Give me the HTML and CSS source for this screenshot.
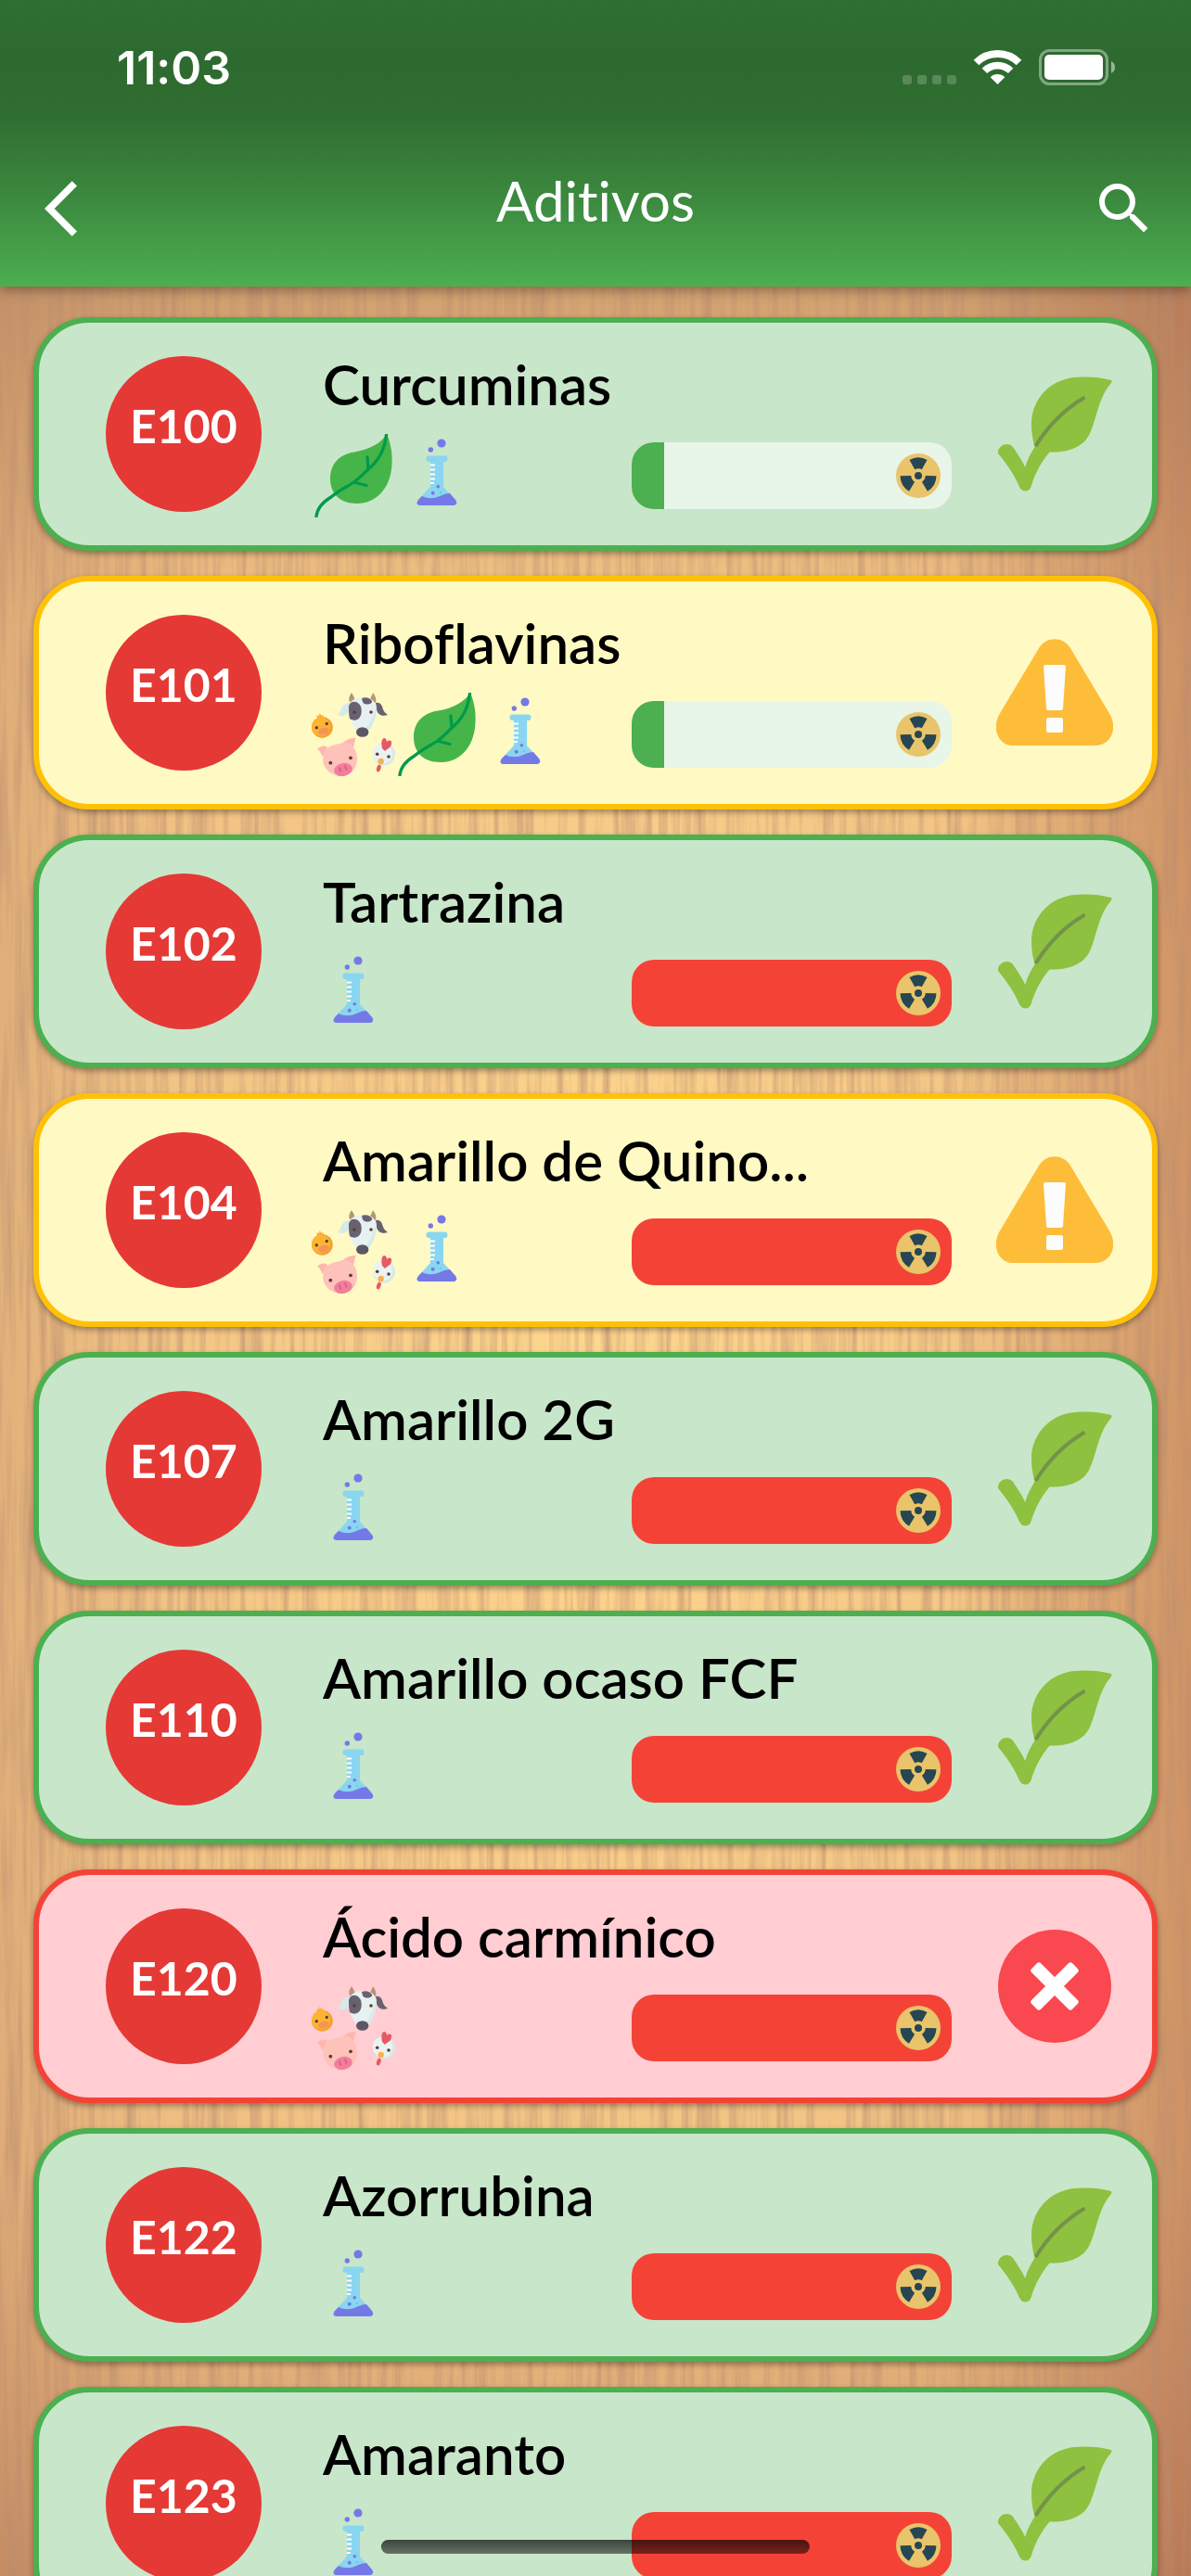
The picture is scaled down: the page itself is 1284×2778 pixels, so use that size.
FILE: index.html
```html
<!DOCTYPE html>
<html lang="es">
<head>
    <meta charset="UTF-8">
    <meta name="viewport" content="width=device-width, initial-scale=1.0">
    <title>Aditivos</title>
    <link rel="stylesheet" href="styles.css">
</head>
<body>
    <!-- Icon definitions -->
    <svg class="defs" aria-hidden="true">
        <symbol id="plant" viewBox="0 0 90 90">
            <path fill="#46b549" d="M81 0C86 12 87 22 86.500 32C86 55 72 75 49 75C30 75 20 64 20 48C20 32 30 22 46 19.500C62 17 75 10 81 0Z"/>
            <path fill="none" stroke="#009b4a" stroke-width="3.300" stroke-linecap="round" d="M80.500 1C79 16 72 29 61 38C56 43 51 48 45.500 52C38 57 29 61 21 68C11 74 6 80 5 89M60 25L61 38M45.500 52L59 55.500"/>
        </symbol>
        <symbol id="flask" viewBox="0 0 90 90">
            <circle cx="50" cy="10" r="4.600" fill="#7579e7"/>
            <circle cx="38.300" cy="17" r="2.700" fill="#7579e7"/>
            <rect x="33.500" y="23.500" width="23" height="6.500" rx="3" fill="#8ad6f0"/>
            <path fill="#8ad6f0" d="M38 28H52V57L65 71C68 75 65 77 62 77H28C24 77 22 75 25 71L38 57Z"/>
            <path fill="#7579e7" d="M29 67C35 70 42 70 48 67C52 65 56 64 59 64L65 71C68 75 65 77 62 77H28C24 77 22 75 25 71Z"/>
            <path stroke="#fff" stroke-width="2" d="M38 33.500H43M38 38.500H43M38 43.500H43M38 48.500H43M38 53H42"/>
            <circle cx="46.300" cy="56.700" r="1.800" fill="#7579e7"/>
            <circle cx="40.700" cy="63.700" r="2" fill="#7579e7"/>
            <circle cx="49" cy="63" r="1.200" fill="#74c3e8"/>
        </symbol>
        <symbol id="animals" viewBox="0 0 90 90">
            <!-- duck -->
            <path fill="#fbb031" d="M6 28L5.500 24L8 25L8.500 22L11 25L13 24L12 29Z"/>
            <circle cx="11.400" cy="37.300" r="11.400" fill="#f4a22c"/>
            <ellipse cx="10" cy="36.500" rx="9.800" ry="10.300" fill="#fdb433"/>
            <ellipse cx="12.700" cy="41.500" rx="6" ry="3.800" fill="#f4935a" transform="rotate(-18 12.700 41.500)"/>
            <circle cx="5.300" cy="37.700" r="1.700" fill="#5a4030"/>
            <circle cx="16.300" cy="33.500" r="1.700" fill="#5a4030"/>
            <!-- cow -->
            <path fill="#b39674" d="M41 10C39 5 42 2 43 0C45 4 47 5 46 9ZM63 9C63 5 65 4 66 0C69 4 70 7 69 11Z"/>
            <path fill="#d6ebe8" d="M41 11C34 11 32 16 31 20C30 22 29 23 28 24C34 27 40 23 41 18Z"/>
            <path fill="#686170" d="M69 11C75 10 76 15 77 18C78 21 80 22 82 24C76 26 71 24 70 18Z"/>
            <path fill="#e7f1f1" d="M40 15C41 8 48 5 55 5C62 5 69 8 70 16C70 28 66 35 62 41H48C44 35 39 27 40 15Z"/>
            <path fill="#d6ebe8" d="M69 14C71 26 66 35 61 41H56C63 34 67 24 69 14Z"/>
            <path fill="#686170" d="M40 15C41 8 50 8 53 15C56 26 49 33 41 28C40 24 40 19 40 15ZM54 6C59 4 63 6 65 9C66 13 57 14 55 10Z"/>
            <ellipse cx="54.700" cy="42.500" rx="6.700" ry="5.300" fill="#5d5665"/>
            <circle cx="46" cy="21" r="1.800" fill="#5a4030"/>
            <circle cx="64" cy="21" r="1.800" fill="#5a4030"/>
            <!-- pig -->
            <path fill="#ffb6ae" d="M17 59C13 56 9 58 6 61C10 63 10 67 12 69ZM34 54C38 50 42 49 48 49C45 53 47 57 44 60Z"/>
            <path fill="#ffc2bb" d="M13 67C16 55 27 57 33 54C42 52 50 62 49 73C48 83 41 90 32 90C20 90 9 79 13 67Z"/>
            <ellipse cx="34" cy="83" rx="10" ry="7" fill="#f27e9c" transform="rotate(-12 34 83)"/>
            <path stroke="#d15b84" stroke-width="1.600" stroke-linecap="round" d="M30 81L31 85M36 79L37.500 83"/>
            <circle cx="20.300" cy="75.700" r="1.900" fill="#5a4030"/>
            <circle cx="42" cy="70.300" r="1.900" fill="#5a4030"/>
            <!-- hen -->
            <ellipse cx="78" cy="66.300" rx="12" ry="12.300" fill="#d9e9e8"/>
            <ellipse cx="76.500" cy="65.500" rx="10.500" ry="11" fill="#e9f3f2"/>
            <path fill="#e55a64" d="M76 60C75 55 75 50 78 49C80 49 81 51 81 53C84 50 87 52 86 55C86 59 82 60 79 63Z"/>
            <circle cx="70.700" cy="66.300" r="1.800" fill="#5a4030"/>
            <circle cx="83" cy="69" r="1.800" fill="#5a4030"/>
            <circle cx="74.700" cy="74" r="3.200" fill="#fbb04a"/>
            <ellipse cx="72.300" cy="81.500" rx="2.200" ry="4" fill="#e55a64" transform="rotate(18 72.300 81.500)"/>
        </symbol>
        <symbol id="radiation" viewBox="0 0 48 48">
            <circle cx="24" cy="24" r="24" fill="#e9c46a"/>
            <g fill="#264653">
                <circle cx="24" cy="24" r="4"/>
                <path id="blade" d="M14.500 7A19.500 19.500 0 0 1 33.500 7L27.800 17.300A7.500 7.500 0 0 0 20.200 17.300Z"/>
                <use href="#blade" transform="rotate(120 24 24)"/>
                <use href="#blade" transform="rotate(240 24 24)"/>
            </g>
        </symbol>
        <symbol id="vegan" viewBox="0 0 126 126">
            <path fill="#8dc13f" d="M124 5C110 1 95 1 85 2C58 4 38 26 38 52C38 60 39 67 41.500 77C37 84 33 92 31.300 99C27 90 22 83 18 77C11 70 1 77 2 84C12 96 20 108 25 120C28 126 35 126 37.500 120C42 105 48 94 57.500 82.500C72 83 84 80 93 73C108 62 106 28 124 8Q125 6 124 5Z"/>
            <path fill="none" stroke="#74924a" stroke-width="4" d="M95.500 23.500C74 36 56 54 42.500 76"/>
        </symbol>
        <symbol id="warning" viewBox="0 0 126 126">
            <path fill="#fdbd39" d="M46 15C54 2 72 2 80 15L123 87C131 103 123 120 107 120H18C3 120 -5 103 3 87Z"/>
            <path fill="#fcfcfc" d="M53 33H73Q75 33 75 35L72 80Q72 82 70 82H56Q54 82 54 80L51 35Q51 33 53 33ZM56 90H70Q72 90 72 92V104Q72 106 70 106H56Q54 106 54 104V92Q54 90 56 90Z"/>
        </symbol>
        <symbol id="forbidden" viewBox="0 0 126 126">
            <circle cx="63" cy="63" r="61" fill="#f9484f"/>
            <g fill="#fff" transform="rotate(45 63 63)">
                <rect x="32" y="56" width="62" height="14" rx="3"/>
                <rect x="56" y="32" width="14" height="62" rx="3"/>
            </g>
        </symbol>
        <filter id="grain" x="0" y="0" width="100%" height="100%">
            <feTurbulence type="fractalNoise" baseFrequency="0.12 0.005" numOctaves="4" seed="8"/>
            <feColorMatrix values="0 0 0 0 0.480  0 0 0 0 0.260  0 0 0 0 0.160  1.300 0 0 0 -0.520"/>
        </filter>
    </svg>

    <svg class="wood" aria-hidden="true"><rect width="100%" height="100%" filter="url(#grain)"/></svg>

    <header class="header">
        <div class="status">
            <span>11:03</span>
            <svg width="229" height="40" viewBox="0 0 229 40" fill="#fff" aria-hidden="true">
                <g opacity=".2">
                    <rect x="0" y="28" width="10" height="10" rx="3"/>
                    <rect x="16" y="28" width="10" height="10" rx="3"/>
                    <rect x="32" y="28" width="10" height="10" rx="3"/>
                    <rect x="48" y="28" width="10" height="10" rx="3"/>
                </g>
                <path fill="none" stroke="#fff" stroke-width="8" d="M79.500 14.500A32.500 32.500 0 0 1 125.500 14.500"/>
                <path fill="none" stroke="#fff" stroke-width="7.600" d="M88.400 23.400A20 20 0 0 1 116.600 23.400"/>
                <path d="M102.500 38L94.700 30.200A11 11 0 0 1 110.300 30.200Z"/>
                <rect x="148.500" y="1.500" width="72" height="36" rx="10" fill="none" stroke="#fff" stroke-width="3" opacity=".4"/>
                <rect x="153" y="6" width="63" height="27" rx="5"/>
                <path opacity=".5" d="M225 13Q229 15 229 19.500Q229 24 225 26Z"/>
            </svg>
        </div>
        <nav class="navbar">
            <a class="back" href="#" aria-label="Volver">
                <svg width="72" height="72" viewBox="0 0 24 24" fill="#fff"><path d="M11.670 3.870L9.900 2.100 0 12l9.900 9.900 1.770-1.770L3.540 12z"/></svg>
            </a>
            <h1>Aditivos</h1>
            <button class="search" type="button" aria-label="Buscar">
                <svg width="72" height="72" viewBox="0 0 24 24" fill="#fff"><path d="M15.500 14h-.79l-.28-.27A6.471 6.471 0 0 0 16 9.500 6.500 6.500 0 1 0 9.500 16c1.610 0 3.090-.59 4.230-1.570l.27.28v.79l5 4.990L20.490 19l-4.990-5zm-6 0C7.010 14 5 11.990 5 9.500S7.010 5 9.500 5 14 7.010 14 9.500 11.990 14 9.500 14z"/></svg>
            </button>
        </nav>
    </header>

    <ul class="list">
        <li><a class="card green" href="#">
            <span class="code">E100</span>
            <div class="info">
                <h2>Curcuminas</h2>
                <div class="row">
                    <svg class="origin"><use href="#plant"/></svg>
                    <svg class="origin"><use href="#flask"/></svg>
                    <div class="bar"><div class="level low" style="width: 10%"></div><svg><use href="#radiation"/></svg></div>
                </div>
            </div>
            <svg class="verdict"><use href="#vegan"/></svg>
        </a></li>
        <li><a class="card yellow" href="#">
            <span class="code">E101</span>
            <div class="info">
                <h2>Riboflavinas</h2>
                <div class="row">
                    <svg class="origin"><use href="#animals"/></svg>
                    <svg class="origin"><use href="#plant"/></svg>
                    <svg class="origin"><use href="#flask"/></svg>
                    <div class="bar"><div class="level low" style="width: 10%"></div><svg><use href="#radiation"/></svg></div>
                </div>
            </div>
            <svg class="verdict"><use href="#warning"/></svg>
        </a></li>
        <li><a class="card green" href="#">
            <span class="code">E102</span>
            <div class="info">
                <h2>Tartrazina</h2>
                <div class="row">
                    <svg class="origin"><use href="#flask"/></svg>
                    <div class="bar"><div class="level high" style="width: 100%"></div><svg><use href="#radiation"/></svg></div>
                </div>
            </div>
            <svg class="verdict"><use href="#vegan"/></svg>
        </a></li>
        <li><a class="card yellow" href="#">
            <span class="code">E104</span>
            <div class="info">
                <h2>Amarillo de Quino...</h2>
                <div class="row">
                    <svg class="origin"><use href="#animals"/></svg>
                    <svg class="origin"><use href="#flask"/></svg>
                    <div class="bar"><div class="level high" style="width: 100%"></div><svg><use href="#radiation"/></svg></div>
                </div>
            </div>
            <svg class="verdict"><use href="#warning"/></svg>
        </a></li>
        <li><a class="card green" href="#">
            <span class="code">E107</span>
            <div class="info">
                <h2>Amarillo 2G</h2>
                <div class="row">
                    <svg class="origin"><use href="#flask"/></svg>
                    <div class="bar"><div class="level high" style="width: 100%"></div><svg><use href="#radiation"/></svg></div>
                </div>
            </div>
            <svg class="verdict"><use href="#vegan"/></svg>
        </a></li>
        <li><a class="card green" href="#">
            <span class="code">E110</span>
            <div class="info">
                <h2>Amarillo ocaso FCF</h2>
                <div class="row">
                    <svg class="origin"><use href="#flask"/></svg>
                    <div class="bar"><div class="level high" style="width: 100%"></div><svg><use href="#radiation"/></svg></div>
                </div>
            </div>
            <svg class="verdict"><use href="#vegan"/></svg>
        </a></li>
        <li><a class="card red" href="#">
            <span class="code">E120</span>
            <div class="info">
                <h2>Ácido carmínico</h2>
                <div class="row">
                    <svg class="origin"><use href="#animals"/></svg>
                    <div class="bar"><div class="level high" style="width: 100%"></div><svg><use href="#radiation"/></svg></div>
                </div>
            </div>
            <svg class="verdict"><use href="#forbidden"/></svg>
        </a></li>
        <li><a class="card green" href="#">
            <span class="code">E122</span>
            <div class="info">
                <h2>Azorrubina</h2>
                <div class="row">
                    <svg class="origin"><use href="#flask"/></svg>
                    <div class="bar"><div class="level high" style="width: 100%"></div><svg><use href="#radiation"/></svg></div>
                </div>
            </div>
            <svg class="verdict"><use href="#vegan"/></svg>
        </a></li>
        <li><a class="card green" href="#">
            <span class="code">E123</span>
            <div class="info">
                <h2>Amaranto</h2>
                <div class="row">
                    <svg class="origin"><use href="#flask"/></svg>
                    <div class="bar"><div class="level high" style="width: 100%"></div><svg><use href="#radiation"/></svg></div>
                </div>
            </div>
            <svg class="verdict"><use href="#vegan"/></svg>
        </a></li>
    </ul>

    <div class="home-indicator"></div>
</body>
</html>
```

FILE: styles.css
```css
* {
    box-sizing: border-box;
}

body {
    display: flex;
    flex-direction: column;
    height: 100vh;
    margin: 0;
    overflow: hidden;
    font-family: Lato, sans-serif;
    font-variant-ligatures: none;
    background-color: #d9a272;
    background-image:
        linear-gradient(rgba(110, 60, 50, 0.4), rgba(110, 60, 50, 0) 25%, rgba(110, 60, 50, 0) 85%, rgba(130, 60, 50, 0.25)),
        linear-gradient(90deg, rgba(150, 100, 80, 0.15), rgba(150, 90, 70, 0) 15%, rgba(150, 70, 50, 0) 80%, rgba(150, 70, 50, 0.35)),
        radial-gradient(ellipse 75% 65% at 50% 53%, #ffd78e, #e6b27c);
}

.defs {
    position: absolute;
    width: 0;
    height: 0;
}

.wood {
    position: fixed;
    inset: 0;
    z-index: -1;
    width: 100%;
    height: 100%;
}

.header {
    flex: none;
    z-index: 1;
    color: #fff;
    background: linear-gradient(#2e6f32, #2e6a2f 20%, #2f6d31 40%, #3c8a3f 70%, #4caf50);
    box-shadow: 0 4px 12px rgba(0, 0, 0, 0.35);
}

.status {
    display: flex;
    align-items: center;
    justify-content: space-between;
    height: 141px;
    padding: 4px 82px 0 126px;
    font-family: Inter, sans-serif;
    font-size: 50px;
    font-weight: 600;
}

.navbar {
    display: grid;
    grid-template-columns: 1fr auto 1fr;
    align-items: center;
    height: 168px;
    padding: 0 36px;
}

.navbar svg {
    display: block;
}

.back {
    justify-self: start;
    padding-left: 12px;
}

.search {
    justify-self: end;
    padding: 0;
    border: none;
    background: none;
    cursor: pointer;
}

h1 {
    margin: 0;
    padding-bottom: 18px;
    font-size: 60px;
    font-weight: 400;
    line-height: 72px;
}

.list {
    flex: 1;
    display: flex;
    flex-direction: column;
    gap: 27px;
    min-height: 0;
    margin: 0;
    padding: 33px 36px;
    overflow-y: auto;
    scrollbar-width: none;
    list-style: none;
}

.card {
    display: flex;
    align-items: center;
    padding: 30px 42px 30px 72px;
    border: 6px solid;
    border-radius: 60px;
    color: #000;
    text-decoration: none;
    box-shadow: 0 3px 6px rgba(0, 0, 0, 0.35);
}

.green {
    background-color: #c8e6c9;
    border-color: #4caf50;
}

.yellow {
    background-color: #fff9c4;
    border-color: #ffc107;
}

.red {
    background-color: #ffcdd2;
    border-color: #f44336;
}

.code {
    display: flex;
    flex: none;
    align-items: center;
    justify-content: center;
    width: 168px;
    height: 168px;
    padding-bottom: 18px;
    border-radius: 50%;
    color: #fff;
    background-color: #e53935;
    font-size: 50px;
    font-weight: 700;
}

.info {
    flex: 1;
    min-width: 0;
    margin: 0 48px 0 54px;
}

h2 {
    margin: 0 0 18px;
    padding-left: 12px;
    overflow: hidden;
    font-size: 60px;
    font-weight: 600;
    line-height: 72px;
    white-space: nowrap;
    text-overflow: ellipsis;
}

.row {
    display: flex;
    align-items: center;
}

.origin {
    flex: none;
    width: 90px;
    height: 90px;
}

.bar {
    display: flex;
    position: relative;
    align-items: center;
    justify-content: flex-end;
    width: 50%;
    height: 72px;
    margin-left: auto;
    padding-right: 12px;
    border-radius: 24px;
    overflow: hidden;
    background-color: #e8f5e9;
}

.bar svg {
    position: relative;
    width: 48px;
    height: 48px;
}

.level {
    position: absolute;
    inset: 0 auto 0 0;
}

.low {
    background-color: #4caf50;
}

.high {
    background-color: #f44336;
}

.verdict {
    flex: none;
    width: 126px;
    height: 126px;
}

.home-indicator {
    position: fixed;
    bottom: 24px;
    left: 50%;
    width: 36%;
    height: 15px;
    border-radius: 8px;
    background: linear-gradient(rgba(0, 0, 0, 0.7), rgba(0, 0, 0, 0.5));
    transform: translateX(-50%);
}
```
